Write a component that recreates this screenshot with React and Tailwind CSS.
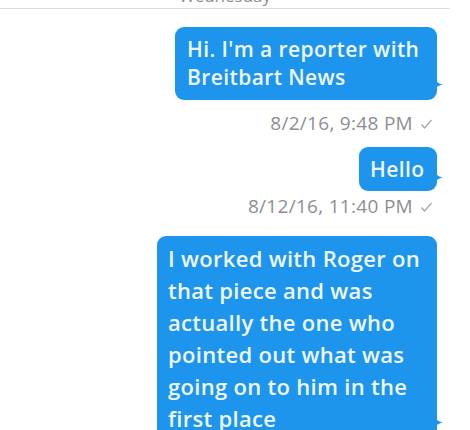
const FONT = { fontFamily: '"Open Sans", "Liberation Sans", Arial, sans-serif' };

function Tail({ className }) {
  return (
    <svg
      width="9"
      height="10"
      viewBox="0 0 9 10"
      className={`absolute -right-[7px] ${className}`}
    >
      <path d="M0 0 C1 4 4 6 8 6 C5 7 2 9 0 10 Z" fill="#1d95ec" />
    </svg>
  );
}

function Check() {
  return (
    <svg width="13" height="12" viewBox="0 0 13 12" className="ml-[7px] mb-[4px]">
      <path d="M1.5 6.5 L4.5 10 L11.5 2" fill="none" stroke="#a3a3a8" strokeWidth="1.2" />
    </svg>
  );
}

function Stamp({ children, className }) {
  return (
    <div className={`flex items-end justify-end pr-[4px] text-[19px] leading-[22px] tracking-[0.3px] font-medium text-[#8e8e93] ${className}`}>
      <span>{children}</span>
      <Check />
    </div>
  );
}

export default function App() {
  return (
    <div className="w-[470px] h-[430px] overflow-hidden bg-white text-white" style={FONT}>
      <div className="h-[8px] overflow-hidden flex justify-center pr-[20px]">
        <span className="text-[17px] leading-[20px] -mt-[14px] text-[#8e8e93]">Wednesday</span>
      </div>
      <div className="h-px bg-[#dcdcdc] mr-[20px]" />

      <div className="flex flex-col items-end pr-[33px]">
        <div className="relative mt-[18px] w-[262px] rounded-[9px] bg-[#1d95ec] pl-[12px] pr-[4px] pt-[8px] pb-[9px] text-[21px] font-semibold leading-[28px] tracking-[0.4px] text-[#eef7fd]">
          Hi. I'm a reporter with Breitbart News
          <Tail className="bottom-[12px]" />
        </div>

        <Stamp className="mt-[12px]">8/2/16, 9:48 PM</Stamp>

        <div className="relative mt-[13px] h-[44px] w-[78px] rounded-[9px] bg-[#1d95ec] pl-[11px] pt-[8px] text-[21px] font-semibold leading-[28px] tracking-[0.4px] text-[#eef7fd]">
          Hello
          <Tail className="bottom-[10px]" />
        </div>

        <Stamp className="mt-[4px]">8/12/16, 11:40 PM</Stamp>

        <div className="relative mt-[19px] w-[280px] rounded-[9px] bg-[#1d95ec] pl-[11px] pr-[4px] pt-[6px] pb-[4px] text-[22px] font-semibold leading-[32px] tracking-[0.3px] text-[#eef7fd]">
          I worked with Roger on that piece and was actually the one who pointed out what was going on to him in the first place
          <Tail className="bottom-[12px]" />
        </div>
      </div>
    </div>
  );
}
